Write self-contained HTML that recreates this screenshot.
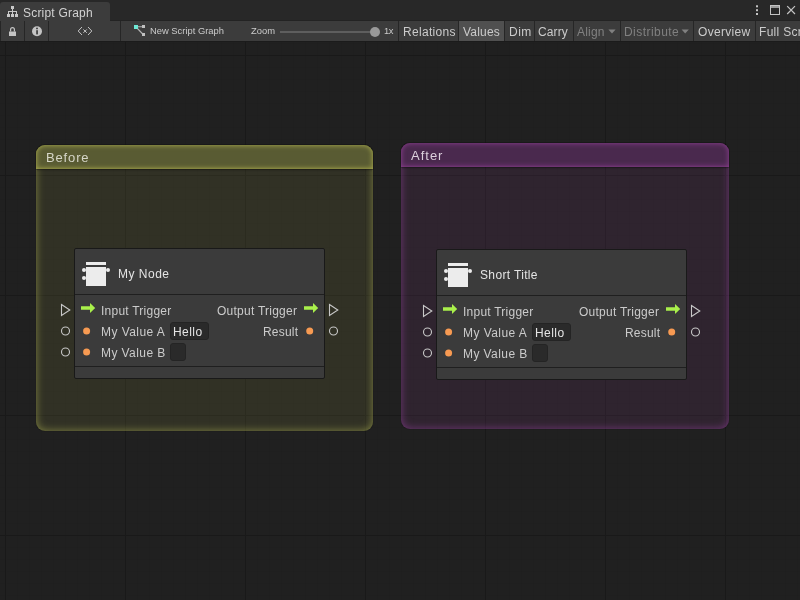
<!DOCTYPE html>
<html><head><meta charset="utf-8">
<style>
*{box-sizing:border-box;margin:0;padding:0}
html,body{width:800px;height:600px;overflow:hidden;background:#202020}
body{position:relative;font-family:"Liberation Sans",sans-serif;font-size:12px;color:#cbcbcb}
.abs{position:absolute}
#canvas{position:absolute;left:0;top:41px;width:800px;height:559px;background:#202020;overflow:hidden}
#grid{position:absolute;left:0;top:0}
#top{position:absolute;left:0;top:0;width:800px;height:21px;background:#282828}
#tab{position:absolute;left:0;top:2px;width:110px;height:19px;background:#3c3c3c;border-radius:3px 3px 0 0}
#tb{position:absolute;left:0;top:21px;width:800px;height:21px;background:#3c3c3c;border-bottom:1px solid #1b1b1b}
.sep{position:absolute;top:21px;width:1px;height:20px;background:#262626}
.t{position:absolute;white-space:nowrap;line-height:14px;height:14px;will-change:transform}
.dis{color:#808080}
.grp{position:absolute;border-radius:9px}
.grp .hs{position:absolute;left:1px;right:1px;top:24px;height:3px;background:linear-gradient(rgba(0,0,0,.22),rgba(0,0,0,0))}
.grp .hd{position:absolute;left:0;top:0;right:0;height:24px;border-radius:9px 9px 0 0}
.node{position:absolute;width:251px;height:131px;background:#3b3b3b;border:1px solid #191919;border-radius:2px}
.node .l1{position:absolute;left:0;right:0;top:45px;height:1px;background:#1f1f1f}
.node .l2{position:absolute;left:0;right:0;top:117px;height:1px;background:#1f1f1f}
.fld{position:absolute;background:#2a2a2a;border:1px solid #242424;border-radius:3px}
</style></head><body>
<div id="canvas">
<svg id="grid" width="800" height="559">
<defs>
<pattern id="mn" x="5" y="2" width="12" height="12" patternUnits="userSpaceOnUse"><path d="M0.5 0V12M0 0.5H12" stroke="#1e1e1e" stroke-width="0.8" fill="none"/></pattern>
<pattern id="mj" x="5" y="14" width="120" height="120" patternUnits="userSpaceOnUse"><path d="M0.5 0V120M0 0.5H120" stroke="#191919" stroke-width="1.1" fill="none"/></pattern>
</defs>
<rect width="800" height="559" fill="url(#mn)"/>
<rect width="800" height="559" fill="url(#mj)"/>
</svg>
</div>

<!-- groups -->
<div class="grp" id="g1" style="left:36px;top:145px;width:337px;height:286px;background:rgba(140,140,62,0.155);box-shadow:0 0 0 1px rgba(18,18,18,.12), inset 0 0 8px 0 rgba(158,162,76,.75)">
 <div class="hd" style="background:rgb(89,91,51);box-shadow:0 0 0 1px rgba(18,18,18,.3), inset 0 0 5px 0.6px rgba(178,180,80,.82), inset 0 -1px 2px 0 rgba(170,170,70,.2)"></div>
 <div class="hs"></div>
</div>
<div class="grp" id="g2" style="left:401px;top:143px;width:328px;height:286px;background:rgba(125,55,130,0.155);box-shadow:0 0 0 1px rgba(18,18,18,.12), inset 0 0 8px 0 rgba(138,62,146,.75)">
 <div class="hd" style="background:rgb(74,41,78);box-shadow:0 0 0 1px rgba(18,18,18,.3), inset 0 0 5px 0.6px rgba(150,66,154,.8), inset 0 -1px 2px 0 rgba(145,60,145,.2)"></div>
 <div class="hs"></div>
</div>
<div class="t" style="left:46px;top:151px;font-size:13px;letter-spacing:.85px;color:#d6d6c8">Before</div>
<div class="t" style="left:411px;top:149px;font-size:13px;letter-spacing:1px;color:#dcd0dc">After</div>

<!-- node template 1 -->
<div class="node" style="left:74px;top:248px"><div class="l1"></div><div class="l2"></div></div>
<div class="node" style="left:436px;top:249px"><div class="l1"></div><div class="l2"></div></div>

<svg class="abs" style="left:0;top:0" width="800" height="600">
<defs>
<g id="nodeart">
 <!-- icon -->
 <rect x="86" y="262" width="20" height="3" fill="#ececec"/>
 <rect x="86" y="267" width="20" height="19" fill="#ececec"/>
 <circle cx="84" cy="270" r="2" fill="#ececec"/>
 <circle cx="84" cy="278" r="2" fill="#ececec"/>
 <circle cx="108" cy="270" r="2" fill="#ececec"/>
 <!-- left ports -->
 <path d="M61.5 304.5L69.8 310L61.5 315.5Z" fill="none" stroke="#c8c8c8" stroke-width="1.1"/>
 <circle cx="65.5" cy="331" r="4" fill="none" stroke="#c8c8c8" stroke-width="1.1"/>
 <circle cx="65.5" cy="352" r="4" fill="none" stroke="#c8c8c8" stroke-width="1.1"/>
 <!-- right ports -->
 <path d="M329.5 304.5L337.8 310L329.5 315.5Z" fill="none" stroke="#c8c8c8" stroke-width="1.1"/>
 <circle cx="333.5" cy="331" r="4" fill="none" stroke="#c8c8c8" stroke-width="1.1"/>
 <!-- arrows -->
 <path d="M81 306.3H90V303L95.2 308L90 313V309.8H81Z" fill="#a9f04b"/>
 <path d="M304 306.3H313V303L318.2 308L313 313V309.8H304Z" fill="#a9f04b"/>
 <!-- dots -->
 <circle cx="86.6" cy="331" r="3.5" fill="#f79a52"/>
 <circle cx="86.6" cy="352" r="3.5" fill="#f79a52"/>
 <circle cx="309.7" cy="331" r="3.5" fill="#f79a52"/>
</g>
</defs>
<use href="#nodeart"/>
<use href="#nodeart" x="362" y="1"/>
</svg>

<!-- node 1 text -->
<div class="t" style="left:118px;top:267px;letter-spacing:.5px;color:#e4e4e4">My Node</div>
<div class="t" style="left:101px;top:304px;letter-spacing:.24px">Input Trigger</div>
<div class="t" style="left:101px;top:325px;letter-spacing:.45px">My Value A</div>
<div class="t" style="left:101px;top:346px;letter-spacing:.42px">My Value B</div>
<div class="t" style="left:217px;top:304px;letter-spacing:.25px">Output Trigger</div>
<div class="t" style="left:263px;top:325px;letter-spacing:.2px">Result</div>
<div class="fld" style="left:170px;top:322px;width:39px;height:18px"></div>
<div class="t" style="left:173px;top:325px;letter-spacing:.45px;color:#e4e4e4">Hello</div>
<div class="fld" style="left:170px;top:343px;width:16px;height:18px"></div>

<!-- node 2 text -->
<div class="t" style="left:480px;top:268px;letter-spacing:.35px;color:#e4e4e4">Short Title</div>
<div class="t" style="left:463px;top:305px;letter-spacing:.24px">Input Trigger</div>
<div class="t" style="left:463px;top:326px;letter-spacing:.45px">My Value A</div>
<div class="t" style="left:463px;top:347px;letter-spacing:.42px">My Value B</div>
<div class="t" style="left:579px;top:305px;letter-spacing:.25px">Output Trigger</div>
<div class="t" style="left:625px;top:326px;letter-spacing:.2px">Result</div>
<div class="fld" style="left:532px;top:323px;width:39px;height:18px"></div>
<div class="t" style="left:535px;top:326px;letter-spacing:.45px;color:#e4e4e4">Hello</div>
<div class="fld" style="left:532px;top:344px;width:16px;height:18px"></div>

<!-- top chrome -->
<div id="top"></div>
<div class="abs" style="left:110px;top:20px;width:690px;height:1px;background:#232323"></div>
<div id="tab"></div>
<div id="tb"></div>
<div class="t" style="left:23px;top:6px;letter-spacing:.2px;color:#d2d2d2">Script Graph</div>
<div class="sep" style="left:0px"></div>
<div class="sep" style="left:24px"></div>
<div class="sep" style="left:48px"></div>
<div class="sep" style="left:120px"></div>
<div class="sep" style="left:398px"></div>
<div class="sep" style="left:458px"></div>
<div class="abs" style="left:459px;top:21px;width:45px;height:20px;background:#505050"></div>
<div class="sep" style="left:504px"></div>
<div class="sep" style="left:534px"></div>
<div class="sep" style="left:573px"></div>
<div class="sep" style="left:620px"></div>
<div class="sep" style="left:693px"></div>
<div class="sep" style="left:755px"></div>
<div class="t" style="left:150px;top:24px;font-size:9.4px">New Script Graph</div>
<div class="t" style="left:251px;top:24px;font-size:9.4px">Zoom</div>
<div class="t" style="left:384px;top:24px;font-size:9.4px;letter-spacing:-.4px">1x</div>
<div class="t" style="left:403px;top:25px;letter-spacing:.3px">Relations</div>
<div class="t" style="left:463px;top:25px;letter-spacing:.2px">Values</div>
<div class="t" style="left:509px;top:25px;letter-spacing:.5px">Dim</div>
<div class="t" style="left:538px;top:25px;letter-spacing:.12px">Carry</div>
<div class="t dis" style="left:577px;top:25px;letter-spacing:.2px">Align</div>
<div class="t dis" style="left:624px;top:25px;letter-spacing:.45px">Distribute</div>
<div class="t" style="left:698px;top:25px;letter-spacing:.32px">Overview</div>
<div class="t" style="left:759px;top:25px;letter-spacing:.3px">Full Screen</div>

<svg class="abs" style="left:0;top:0" width="800" height="41">
 <!-- tab icon -->
 <g fill="#c8c8c8">
  <rect x="11" y="6" width="3" height="3"/>
  <rect x="7" y="14" width="3" height="3"/><rect x="11" y="14" width="3" height="3"/><rect x="15" y="14" width="3" height="3"/>
  <rect x="12" y="9" width="1" height="5"/>
  <rect x="8" y="11" width="9" height="1"/>
  <rect x="8" y="11" width="1" height="3"/><rect x="16" y="11" width="1" height="3"/>
 </g>
 <!-- lock -->
 <rect x="9" y="31.5" width="7" height="4.5" fill="#c4c4c4"/>
 <path d="M10.6 31.5V29.6A1.9 2 0 0 1 14.4 29.6V31.5" fill="none" stroke="#c4c4c4" stroke-width="1.2"/>
 <!-- info -->
 <circle cx="37" cy="31.2" r="5" fill="#c4c4c4"/>
 <circle cx="37" cy="28.4" r="0.95" fill="#3c3c3c"/>
 <rect x="36.2" y="30.2" width="1.7" height="4.2" fill="#3c3c3c"/>
 <!-- <x> -->
 <g fill="none" stroke="#c4c4c4" stroke-width="1">
  <path d="M82 27L78.2 31L82 35"/><path d="M88 27L91.8 31L88 35"/>
  <path d="M83.4 29.4L86.8 32.8M86.8 29.4L83.4 32.8"/>
 </g>
 <!-- graph icon -->
 <path d="M137 26.7H143M136.5 27.5L143.2 34.5" stroke="#b4b4b4" stroke-width="1.1" fill="none"/>
 <rect x="134" y="25" width="4" height="4" fill="#6ee8d5"/>
 <rect x="142" y="25" width="3" height="3" fill="#c0c0c0"/>
 <rect x="142" y="33" width="3" height="3" fill="#c0c0c0"/>
 <!-- slider -->
 <rect x="280" y="31" width="92" height="2" fill="#5e5e5e"/>
 <circle cx="375" cy="32" r="5" fill="#999999"/>
 <!-- dropdown arrows -->
 <path d="M608.4 29.5H615.6L612 33.5Z" fill="#808080"/>
 <path d="M681.6 29.5H688.8L685.2 33.5Z" fill="#808080"/>
 <!-- window icons -->
 <g fill="#c4c4c4"><rect x="756" y="5.3" width="2" height="2"/><rect x="756" y="9.2" width="2" height="2"/><rect x="756" y="13" width="2" height="2"/></g>
 <rect x="770.5" y="5.5" width="9" height="9" fill="none" stroke="#c4c4c4" stroke-width="1"/>
 <rect x="771" y="6" width="8" height="2" fill="#9c9c9c"/>
 <path d="M787.2 6.2L795 14M795 6.2L787.2 14" stroke="#c4c4c4" stroke-width="1.2" fill="none"/>
</svg>
</body></html>
